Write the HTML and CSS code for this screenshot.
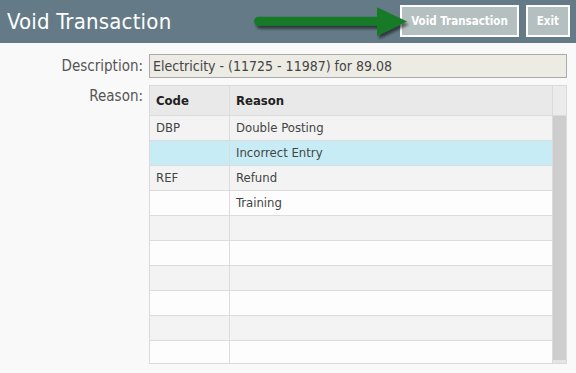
FILE: index.html
```html
<!DOCTYPE html>
<html>
<head>
<meta charset="utf-8">
<link rel="stylesheet" href="styles.css">
</head>
<body>
<header class="topbar">
  <h1 class="title">Void Transaction</h1>
  <div class="actions">
    <button class="btn">Void Transaction</button>
    <button class="btn">Exit</button>
  </div>
  <svg class="pointer" width="175" height="45" viewBox="0 0 175 45">
    <defs>
      <filter id="sh" x="-20%" y="-50%" width="140%" height="200%">
        <feGaussianBlur in="SourceAlpha" stdDeviation="1.6"/>
        <feOffset dx="2" dy="3" result="b"/>
        <feComponentTransfer><feFuncA type="linear" slope="0.55"/></feComponentTransfer>
        <feMerge><feMergeNode/><feMergeNode in="SourceGraphic"/></feMerge>
      </filter>
    </defs>
    <g filter="url(#sh)">
      <line x1="18.5" y1="21.3" x2="139" y2="21.3" stroke="#167a28" stroke-width="9" stroke-linecap="round"/>
      <polygon points="137,7.3 137,36 167,21.5" fill="#167a28"/>
    </g>
  </svg>
</header>
<main class="form">
  <label class="lbl">Description:</label>
  <div class="field">Electricity - (11725 - 11987) for 89.08</div>
  <label class="lbl lbl-reason">Reason:</label>
  <div class="grid">
    <div class="grid-main">
      <div class="row head"><div class="c1">Code</div><div class="c2">Reason</div></div>
      <div class="body">
        <div class="row odd"><div class="c1">DBP</div><div class="c2">Double Posting</div></div>
        <div class="row sel"><div class="c1"></div><div class="c2">Incorrect Entry</div></div>
        <div class="row odd"><div class="c1">REF</div><div class="c2">Refund</div></div>
        <div class="row"><div class="c1"></div><div class="c2">Training</div></div>
        <div class="row odd"><div class="c1"></div><div class="c2"></div></div>
        <div class="row"><div class="c1"></div><div class="c2"></div></div>
        <div class="row odd"><div class="c1"></div><div class="c2"></div></div>
        <div class="row"><div class="c1"></div><div class="c2"></div></div>
        <div class="row odd"><div class="c1"></div><div class="c2"></div></div>
        <div class="row"><div class="c1"></div><div class="c2"></div></div>
      </div>
    </div>
    <div class="scroll">
      <div class="scroll-head"></div>
      <div class="scroll-thumb"></div>
      <div class="scroll-foot"></div>
    </div>
  </div>
</main>
</body>
</html>
```
FILE: styles.css
```css
html, body { margin: 0; padding: 0; }
body {
  background: #f9f9f9;
  font-family: "DejaVu Sans Condensed", "DejaVu Sans", sans-serif;
  color: #444;
  width: 576px;
  height: 373px;
  overflow: hidden;
}
.topbar {
  position: relative;
  height: 43px;
  background: #647b87;
  display: flex;
  align-items: center;
  justify-content: space-between;
  padding: 0 6px 0 7px;
  box-sizing: border-box;
}
.title {
  margin: 0 0 1px 0;
  font-size: 22px;
  font-weight: normal;
  color: #fff;
  letter-spacing: 0.2px;
}
.actions {
  display: flex;
  gap: 7px;
  align-self: flex-start;
  margin-top: 5px;
}
.btn {
  height: 32px;
  border: 2px solid #fff;
  background: #b4c0bf;
  color: #fff;
  font-family: inherit;
  font-size: 11.5px;
  font-weight: bold;
  padding: 0 9px 0 9px;
}
.pointer {
  position: absolute;
  left: 240px;
  top: 0;
}
.form {
  display: grid;
  grid-template-columns: 143px 1fr;
  column-gap: 6px;
  row-gap: 7px;
  padding: 11px 9px 0 0;
}
.lbl {
  text-align: right;
  font-size: 15px;
  color: #555;
  line-height: 24px;
}
.lbl-reason { line-height: 22px; }
.field {
  height: 24px;
  box-sizing: border-box;
  border: 1px solid #aaa;
  background: #ecebe4;
  font-size: 14px;
  line-height: 22px;
  padding-left: 3px;
  color: #444;
}
.grid {
  display: flex;
  border: 1px solid #dadada;
  height: 279px;
  box-sizing: border-box;
  background: #fdfdfd;
}
.grid-main { flex: 1; display: flex; flex-direction: column; }
.row {
  display: flex;
  height: 25px;
  box-sizing: border-box;
  border-bottom: 1px solid #dcdcdc;
  background: #fdfdfd;
  font-size: 13px;
  line-height: 24px;
  flex-shrink: 0;
}
.row.odd { background: #f3f3f3; }
.row.sel { background: #c8ecf5; }
.row.head {
  height: 30px;
  line-height: 29px;
  background: #e9e9e9;
  font-weight: bold;
  color: #222;
}
.body { flex: 1; overflow: hidden; }
.c1 { width: 73px; border-right: 1px solid #dcdcdc; padding-left: 6px; }
.c2 { flex: 1; padding-left: 6px; }
.scroll {
  width: 13px;
  border-left: 1px solid #dadada;
  display: flex;
  flex-direction: column;
}
.scroll-head { height: 29px; background: #ebebeb; border-bottom: 1px solid #dadada; }
.scroll-thumb { flex: 1; background: #cdcdcd; }
.scroll-foot { height: 3px; background: #e4e4e4; }
```
